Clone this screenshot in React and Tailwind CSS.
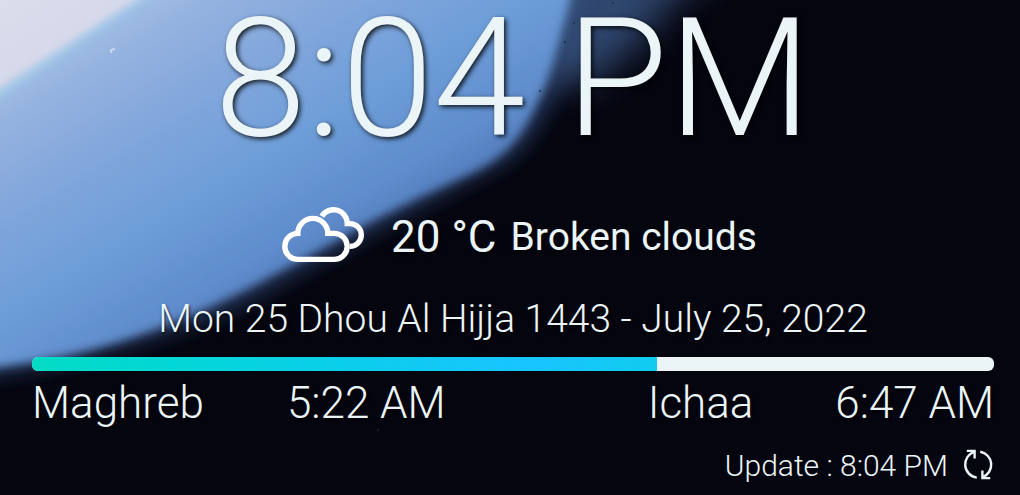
import React from "react";

const elapsed = 65;

function Wallpaper() {
  return (
    <svg
      className="absolute inset-0 h-full w-full"
      viewBox="0 0 1020 495"
      preserveAspectRatio="none"
      aria-hidden="true"
    >
      <defs>
        <linearGradient id="petal" gradientUnits="userSpaceOnUse" x1="60" y1="30" x2="240" y2="330">
          <stop offset="0" stopColor="#a4c2e6" />
          <stop offset="0.16" stopColor="#94b1df" />
          <stop offset="0.36" stopColor="#82a7dc" />
          <stop offset="0.62" stopColor="#6d9dd8" />
          <stop offset="0.85" stopColor="#5f8ccc" />
          <stop offset="1" stopColor="#5079ba" />
        </linearGradient>
        <linearGradient id="pale" x1="0" y1="0" x2="1" y2="1">
          <stop offset="0" stopColor="#dddfed" />
          <stop offset="1" stopColor="#cfd2e6" />
        </linearGradient>
        <filter id="blur3" x="-20%" y="-20%" width="140%" height="140%">
          <feGaussianBlur stdDeviation="3" />
        </filter>
        <filter id="blur5" x="-20%" y="-20%" width="140%" height="140%">
          <feGaussianBlur stdDeviation="5" />
        </filter>
        <filter id="blur9" x="-20%" y="-20%" width="140%" height="140%">
          <feGaussianBlur stdDeviation="9" />
        </filter>
        <filter id="blur18" x="-50%" y="-50%" width="200%" height="200%">
          <feGaussianBlur stdDeviation="18" />
        </filter>
      </defs>
      <rect width="1020" height="495" fill="#05050f" />
      <path
        d="M-40 382L0 377C70 367 130 350 200 325C250 307 300 274 345 251C400 220 450 194 500 168C532 151 548 116 566 78C578 50 584 10 600-40H-40Z"
        fill="#1a2c4a"
        filter="url(#blur9)"
      />
      <path d="M535-50H740L670 2L640 42L590 84L545 80Z" fill="#36527e" fillOpacity="0.85" filter="url(#blur18)" />
      <path
        d="M-40 372L0 367C60 359 115 346 172 323C224 303 270 277 320 250C375 218 424 195 474 172C518 150 529 122 546 84C558 54 566 10 582-40H-40Z"
        fill="url(#petal)"
        filter="url(#blur5)"
      />
      <path d="M-20 104L150-10" stroke="#a6c8e8" strokeWidth="12" filter="url(#blur3)" />
      <path d="M-20-20H166L-20 101Z" fill="url(#pale)" filter="url(#blur3)" />
      <path d="M111 53v-3l4-1" stroke="#c8d8f0" strokeWidth="2" fill="none" />
      <g fill="#1d2c48">
        <circle cx="574" cy="23" r="1" />
        <circle cx="540" cy="91" r="1" />
        <circle cx="613" cy="3" r="1" />
        <circle cx="565" cy="42" r="1" />
      </g>
      <circle cx="378" cy="430" r="1" fill="#252530" />
    </svg>
  );
}

function CloudsIcon() {
  return (
    <svg
      className="h-[72px] w-[108px] shrink-0"
      viewBox="0 0 108 72"
      fill="none"
      stroke="#ffffff"
      strokeWidth="5.4"
      role="img"
      aria-label="Clouds"
    >
      <path d="M28.8 58.4a13 13 0 0 1 0-26A15 15 0 0 1 58.8 32.4h6.4a13 13 0 0 1 0 26z" />
      <path d="M52.8 15.2A13.8 13.8 0 0 1 78.3 22.6h2.6a11.4 11.4 0 0 1 0 22.8" />
    </svg>
  );
}

function RefreshIcon() {
  return (
    <svg
      className="h-8 w-8 shrink-0"
      viewBox="0 0 32 32"
      fill="none"
      stroke="#ebf5f8"
      strokeWidth="2.4"
      aria-hidden="true"
    >
      <path d="M14.8 28.6A13.2 13.2 0 0 1 12.4 2.9" />
      <path d="M4.8 1.9h7.8v7.6" />
      <path d="M18.2 2.7a13.2 13.2 0 0 1 2.4 25.4" />
      <path d="M28.2 29.1h-7.8v-7.6" />
    </svg>
  );
}

function Prayer({ name, time, className }) {
  return (
    <div className={"flex justify-between " + className}>
      <span>{name}</span>
      <time>{time}</time>
    </div>
  );
}

export default function App() {
  return (
    <main className="relative isolate min-h-screen overflow-hidden bg-[#05050f] font-['Roboto',sans-serif] font-light whitespace-nowrap text-[#ebf5f8]">
      <Wallpaper />
      <div className="relative flex flex-col pr-[26px] pl-8 [text-shadow:1px_2px_3px_rgba(0,0,0,0.75)]">
        <h1 className="text-center text-[166px] leading-[158px] [text-shadow:2px_2px_5px_rgba(0,0,0,0.85)]">
          8:04 PM
        </h1>

        <section className="mt-[51px] flex h-14 items-center justify-center gap-[14px] font-normal">
          <CloudsIcon />
          <span className="text-[44px]">20 °C</span>
          <span className="text-[39px]">Broken clouds</span>
        </section>

        <p className="mt-[30px] text-center text-[39px] leading-[48px]">
          Mon 25 Dhou Al Hijja 1443 - July 25, 2022
        </p>

        <div
          className="mt-[14px] h-[14px] overflow-hidden rounded-md bg-[#ebf5f8]"
          role="progressbar"
          aria-label="Time until Ichaa"
          aria-valuemin={0}
          aria-valuemax={100}
          aria-valuenow={elapsed}
        >
          <div
            className="h-full bg-linear-to-r from-[#03dcc4] via-[#18c4ff] via-79% to-[#11cbee]"
            style={{ width: `${elapsed}%` }}
          />
        </div>

        <section className="mt-2 flex justify-between text-[44px] leading-[48px]">
          <Prayer name="Maghreb" time="5:22 AM" className="w-[43%]" />
          <Prayer name="Ichaa" time="6:47 AM" className="w-[36%]" />
        </section>

        <button type="button" className="mt-5 flex h-9 items-center gap-[14px] self-end text-[30px]">
          <span>Update : 8:04 PM</span>
          <RefreshIcon />
        </button>
      </div>
    </main>
  );
}
